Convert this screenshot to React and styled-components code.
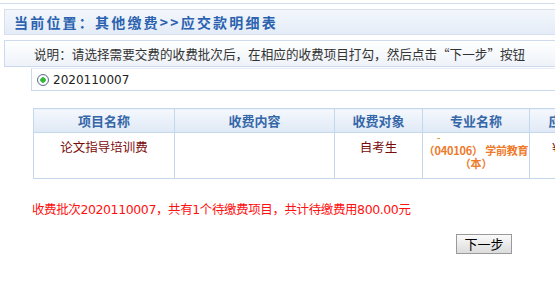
import styled, { createGlobalStyle } from 'styled-components'

const GlobalStyle = createGlobalStyle`
    html, body {
        margin: 0;
        padding: 0;
        overflow: hidden;
        background: #fff;
    }
    body {
        font-family: "Noto Sans CJK SC", "Liberation Sans", sans-serif;
        font-size: 13px;
        color: #333;
    }
`

const Page = styled.div`
    width: 780px;
    padding-top: 3px;
`

const TopLine = styled.div`
    border-top: 1px solid #cfdcec;
    padding: 5px 0 0 4px;
`

const Crumb = styled.div`
    height: 24px;
    display: flex;
    align-items: center;
    padding-left: 9px;
    border: 1px solid #d6e0ee;
    background: linear-gradient(#f3f7fc, #e4ecf7);
    color: #2a62b0;
    font-family: "Noto Sans CJK SC", sans-serif;
    font-weight: bold;
    font-size: 14px;
    letter-spacing: 2.2px;
`

const Note = styled.div`
    margin: 5px 0 0 4px;
    height: 25px;
    display: flex;
    align-items: center;
    padding-left: 29px;
    border: 1px solid #cddaeb;
    background: linear-gradient(#ffffff, #eef3f9);
    color: #333;
    font-size: 12.6px;
`

const BatchRow = styled.label`
    margin: 1px 0 0 31px;
    height: 21px;
    display: flex;
    align-items: center;
    gap: 4px;
    padding-left: 5px;
    border-left: 1px solid #c9d8ea;
    border-bottom: 1px solid #c9d8ea;
    border-top: 1px solid #e6edf6;
    color: #222;
    font-family: "DejaVu Sans", "Noto Sans CJK SC", sans-serif;
    font-size: 12px;
`

const Radio = styled.span`
    width: 10px;
    height: 10px;
    border-radius: 50%;
    border: 1px solid #5a6f8a;
    background: radial-gradient(circle, #3cb43c 0 2.5px, #ffffff 3px, #e6ebf1 100%);
    flex: none;
`

const Table = styled.table`
    margin: 17px 0 0 33px;
    border-collapse: collapse;
    table-layout: fixed;
    width: 586px;
`

const Th = styled.th`
    height: 23px;
    padding: 0;
    border: 1px solid #c5d7ed;
    background: linear-gradient(#f5f8fd, #dfe9f6);
    color: #3567a8;
    font-size: 13px;
    font-weight: bold;
    text-align: center;
    white-space: nowrap;
    overflow: hidden;
`

const Td = styled.td`
    height: 41px;
    padding: 4px ${(p) => (p.$tight ? 0 : 2)}px 0;
    border: 1px solid #c5d7ed;
    color: #7a0a0a;
    font-size: 12.5px;
    text-align: center;
    vertical-align: top;
`

const Major = styled.div`
    color: #ee7a2a;
    font-size: 11px;
    font-weight: bold;
    line-height: 13px;
    letter-spacing: -0.2px;
    text-align: center;
`

const Dash = styled.div`
    width: 3px;
    height: 1px;
    margin: 1px 0 5px 14px;
    background: #f0a040;
`

const Summary = styled.p`
    margin: 20px 0 0 32px;
    color: #ff1010;
    font-size: 12.5px;
    font-family: "DejaVu Sans", "Noto Sans CJK SC", sans-serif;
    letter-spacing: -0.4px;
`

const Actions = styled.div`
    display: flex;
    justify-content: flex-end;
    padding: 16px 268px 0 0;
`

const NextButton = styled.button`
    width: 56px;
    height: 20px;
    padding: 0;
    border: 1px solid #9a9a9a;
    background: linear-gradient(#fafafa, #dcdcdc);
    color: #000;
    font-family: "Noto Sans CJK SC", sans-serif;
    font-size: 13px;
    line-height: 18px;
    cursor: pointer;
`

const columns = [
    { title: '项目名称', width: 141 },
    { title: '收费内容', width: 160 },
    { title: '收费对象', width: 88 },
    { title: '专业名称', width: 107 },
    { title: '应缴金额', width: 90 },
]

const App = () => {
    return (
        <>
            <GlobalStyle />
            <Page>
                <TopLine>
                    <Crumb>当前位置：其他缴费&gt;&gt;应交款明细表</Crumb>
                </TopLine>
                <Note>说明：请选择需要交费的收费批次后，在相应的收费项目打勾，然后点击“下一步”按钮</Note>
                <BatchRow>
                    <Radio />
                    2020110007
                </BatchRow>
                <Table>
                    <colgroup>
                        {columns.map((c) => <col key={c.title} style={{ width: c.width }} />)}
                    </colgroup>
                    <thead>
                        <tr>
                            {columns.map((c) => <Th key={c.title}>{c.title}</Th>)}
                        </tr>
                    </thead>
                    <tbody>
                        <tr>
                            <Td>论文指导培训费</Td>
                            <Td></Td>
                            <Td>自考生</Td>
                            <Td $tight>
                                <Dash />
                                <Major>（040106） 学前教育（本）</Major>
                            </Td>
                            <Td>¥800.00</Td>
                        </tr>
                    </tbody>
                </Table>
                <Summary>收费批次2020110007，共有1个待缴费项目，共计待缴费用800.00元</Summary>
                <Actions>
                    <NextButton type='button'>下一步</NextButton>
                </Actions>
            </Page>
        </>
    )
}

export default App
